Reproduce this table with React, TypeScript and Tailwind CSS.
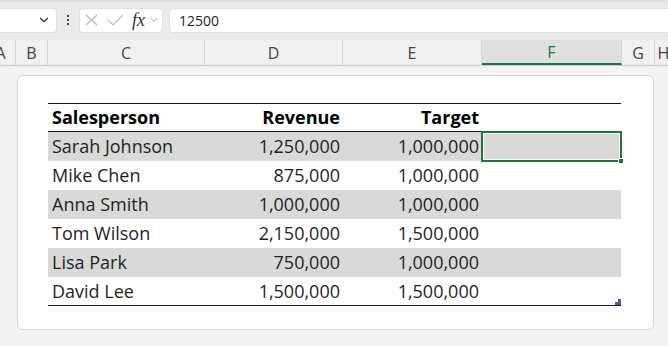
import { ChevronDown } from "lucide-react";

const rows = [
  { name: "Sarah Johnson", revenue: "1,250,000", target: "1,000,000" },
  { name: "Mike Chen", revenue: "875,000", target: "1,000,000" },
  { name: "Anna Smith", revenue: "1,000,000", target: "1,000,000" },
  { name: "Tom Wilson", revenue: "2,150,000", target: "1,500,000" },
  { name: "Lisa Park", revenue: "750,000", target: "1,000,000" },
  { name: "David Lee", revenue: "1,500,000", target: "1,500,000" },
];

const cols = [
  { label: "A", w: "w-[30px] -ml-[14px]" },
  { label: "B", w: "w-[32px]" },
  { label: "C", w: "w-[157px]" },
  { label: "D", w: "w-[138px]" },
  { label: "E", w: "w-[139px]" },
  { label: "F", w: "w-[140px]", active: true },
  { label: "G", w: "w-[33px]" },
  { label: "H", w: "w-[18px]" },
];

export default function App() {
  return (
    <div className="w-[668px] h-[346px] overflow-hidden bg-[#f3f3f3] font-['Open_Sans',sans-serif]">
      {/* Formula bar */}
      <div className="h-[40px] bg-[#ebebeb] flex items-center gap-[6px] shadow-[inset_0_2px_2px_rgba(0,0,0,0.06)]">
        <div className="-ml-[40px] w-[97px] h-[25px] bg-white rounded-[4px] border border-[#e0e0e0] flex items-center justify-end pr-[5px]">
          <ChevronDown size={14} strokeWidth={2} className="text-[#333]" />
        </div>
        <div className="w-[10px] flex flex-col items-center gap-[2px]">
          <span className="w-[2px] h-[2px] bg-[#444]" />
          <span className="w-[2px] h-[2px] bg-[#444]" />
          <span className="w-[2px] h-[2px] bg-[#444]" />
        </div>
        <div className="w-[84px] h-[25px] bg-white rounded-[4px] border border-[#e0e0e0] flex items-center pl-[5px]">
          <svg width="13" height="12" viewBox="0 0 13 12" className="shrink-0">
            <path d="M1 1 L12 11 M12 1 L1 11" stroke="#b8b8b8" strokeWidth="1.1" fill="none" />
          </svg>
          <svg width="17" height="12" viewBox="0 0 17 12" className="ml-[9px] shrink-0">
            <path d="M1 6 L6 11 L16 1" stroke="#b8b8b8" strokeWidth="1.1" fill="none" />
          </svg>
          <span className="ml-[8px] font-['Liberation_Serif',serif] italic text-[18px] text-[#333] leading-none">
            fx
          </span>
          <ChevronDown size={12} strokeWidth={1.5} className="text-[#888] ml-[3px]" />
        </div>
        <div className="flex-1 h-[25px] bg-white rounded-l-[4px] border border-r-0 border-[#e0e0e0] flex items-center pl-[9px] text-[14px] text-[#222]">
          12500
        </div>
      </div>

      {/* Column headers */}
      <div className="h-[26px] bg-[#f0f0f0] flex border-b border-[#c8c8c8]">
        {cols.map((c) => (
          <div
            key={c.label}
            className={`${c.w} shrink-0 flex items-center justify-center text-[16px] border-r border-[#d4d4d4] ${
              c.active
                ? "bg-[#e0e0e0] text-[#217346] border-b-2 border-b-[#217346]"
                : "text-[#444]"
            }`}
          >
            {c.label}
          </div>
        ))}
      </div>

      {/* Sheet */}
      <div className="pt-[9px] pl-[17px]">
        <div className="w-[637px] h-[255px] bg-white border border-[#d6d6d6] rounded-[6px] pt-[27px] pl-[30px]">
          <div className="w-[573px] text-[18px] text-[#1f1f1f]">
            <div className="grid grid-cols-[157px_138px_139px_139px] h-[29px] border-t border-b border-[#1a1a1a] font-bold text-black">
              <div className="flex items-center pl-[4px]">Salesperson</div>
              <div className="flex items-center justify-end pr-[3px]">Revenue</div>
              <div className="flex items-center justify-end pr-[3px]">Target</div>
              <div />
            </div>
            {rows.map((r, i) => (
              <div
                key={r.name}
                className={`grid grid-cols-[157px_138px_139px_139px] h-[29px] ${
                  i % 2 === 0 ? "bg-[#d9d9d9]" : "bg-white"
                } ${i === rows.length - 1 ? "border-b border-[#1a1a1a]" : ""}`}
              >
                <div className="flex items-center pl-[4px]">{r.name}</div>
                <div className="flex items-center justify-end pr-[3px]">{r.revenue}</div>
                <div className="flex items-center justify-end pr-[3px]">{r.target}</div>
                <div className="relative">
                  {i === 0 && (
                    <>
                      <div className="absolute -top-[1px] -left-[1px] -right-[1px] -bottom-[1px] border-2 border-[#217346] shadow-[inset_0_0_0_1px_#fff]" />
                      <div className="absolute -right-[3px] -bottom-[3px] w-[6px] h-[6px] bg-[#217346] border border-white" />
                    </>
                  )}
                  {i === rows.length - 1 && (
                    <svg className="absolute right-0 bottom-0" width="6" height="6" viewBox="0 0 6 6">
                      <polygon points="6,0 6,6 0,6 0,3 3,3 3,0" fill="#4a5aa8" />
                    </svg>
                  )}
                </div>
              </div>
            ))}
          </div>
        </div>
      </div>
    </div>
  );
}
